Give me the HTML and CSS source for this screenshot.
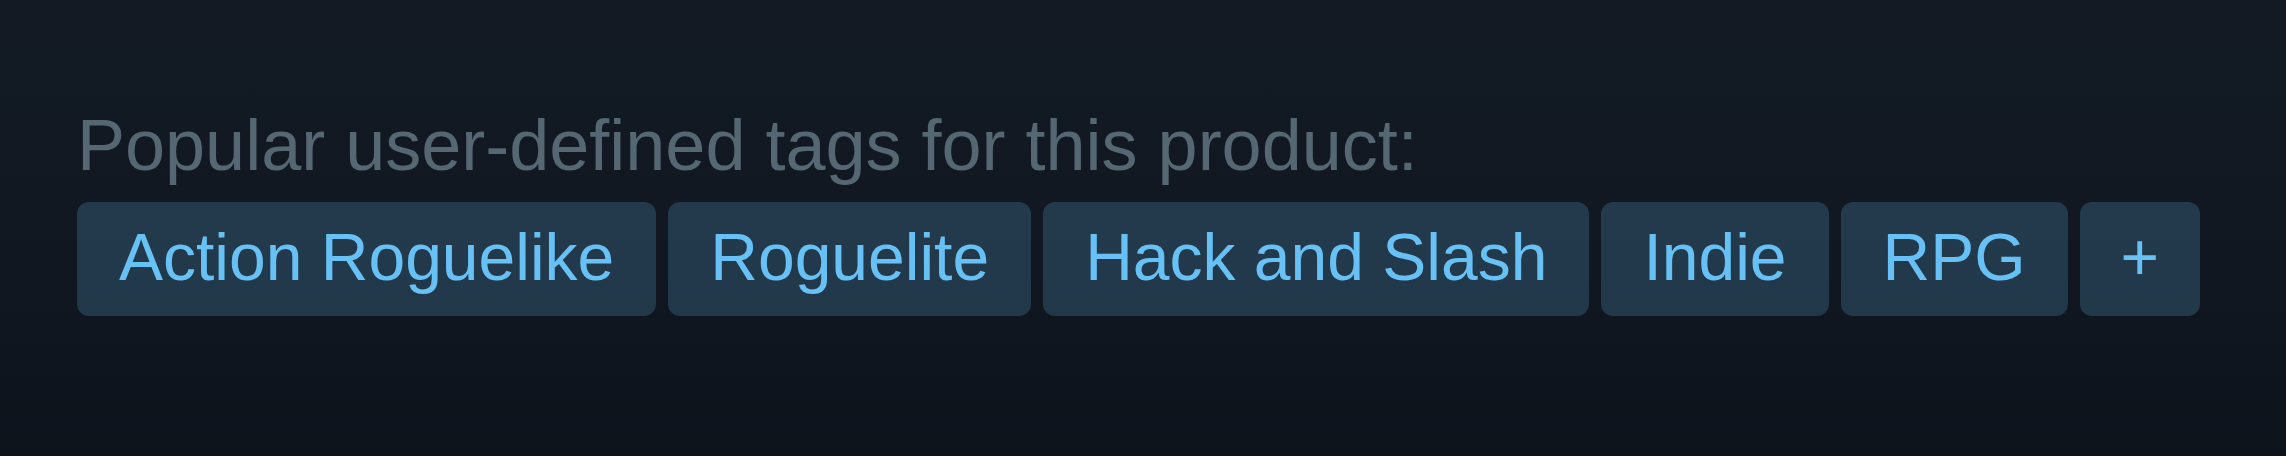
FILE: index.html
```html
<!DOCTYPE html>
<html lang="en">
<head>
    <meta charset="UTF-8">
    <meta name="viewport" content="width=device-width, initial-scale=1.0">
    <title>Tags</title>
    <link rel="stylesheet" href="styles.css">
</head>
<body>
    <div class="glance_tags_area">
        <div class="glance_tags_label">Popular user-defined tags for this product:</div>
        <div class="glance_tags">
            <a href="#" class="app_tag">Action Roguelike</a>
            <a href="#" class="app_tag">Roguelite</a>
            <a href="#" class="app_tag">Hack and Slash</a>
            <a href="#" class="app_tag">Indie</a>
            <a href="#" class="app_tag">RPG</a>
            <a href="#" class="app_tag add_button">+</a>
        </div>
    </div>
</body>
</html>
```

FILE: styles.css
```css
* {
    box-sizing: border-box;
}

body {
    margin: 0;
    padding: 0;
    width: 100vw;
    height: 100vh;
    overflow: hidden;
    font-family: "Liberation Sans", Arial, Helvetica, sans-serif;
    background: linear-gradient(to bottom, #121a24 0%, #111822 50%, #0d131b 100%);
}

.glance_tags_area {
    padding: 88px 0 0 77px;
}

.glance_tags_label {
    color: #556772;
    font-size: 72px;
    line-height: 114px;
    white-space: nowrap;
}

.glance_tags {
    display: flex;
    gap: 12px;
}

/* text sits a touch above centre */
.app_tag {
    display: block;
    padding: 0 42px 4px;
    font-size: 66px;
    line-height: 110px;
    color: #67c1f5;
    background-color: rgba(103, 193, 245, 0.2);
    border-radius: 12px;
    text-decoration: none;
    white-space: nowrap;
}

.add_button {
    padding: 0 41px 4px;
}
```
